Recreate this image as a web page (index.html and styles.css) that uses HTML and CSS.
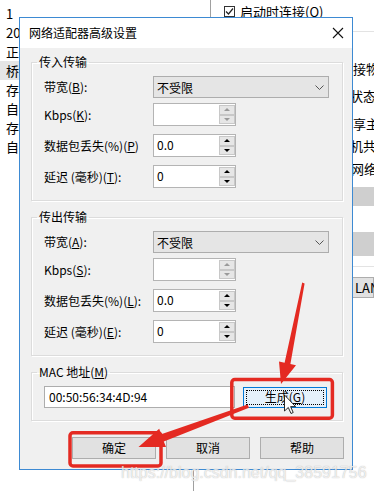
FILE: index.html
```html
<!DOCTYPE html>
<html lang="zh-CN">
<head>
  <meta charset="UTF-8">
  <meta name="viewport" content="width=device-width, initial-scale=1.0">
  <title>网络适配器高级设置</title>
  <link rel="stylesheet" href="styles.css">
</head>
<body>
  <div class="screen">
    <!-- window behind the dialog -->
    <div class="backdrop">
      <div class="back-main">
        <ul class="list">
          <li>1</li>
          <li>20</li>
          <li>正在</li>
          <li class="sel">桥接</li>
          <li>存在</li>
          <li>自动</li>
          <li>存在</li>
          <li>自动</li>
        </ul>
        <div class="pane">
          <div class="pane-top">
            <span class="check">
              <svg width="9" height="9" viewBox="0 0 9 9"><path d="M1 4.5L3.5 7L8 1.5" fill="none" stroke="#222" stroke-width="1.2"/></svg>
            </span>
            启动时连接(<u>O</u>)
          </div>
          <div class="pane-text">
            <p class="l1">连接物理</p>
            <p class="l2">的状态</p>
            <p class="l3">共享主</p>
            <p class="l4">算机共</p>
            <p class="l5">的网络</p>
          </div>
          <div class="bar bar-a"></div>
          <div class="bar bar-b"></div>
          <div class="rule"></div>
          <div class="lan">LAN</div>
        </div>
      </div>
      <div class="back-foot"></div>
    </div>

    <div class="dialog">
      <div class="titlebar">
        <span class="title">网络适配器高级设置</span>
        <svg class="close" width="12" height="12" viewBox="0 0 12 12"><path d="M1 1L11 11M11 1L1 11" stroke="#111" stroke-width="1.1"/></svg>
      </div>
      <div class="dialog-body">
        <fieldset class="group">
          <legend>传入传输</legend>
          <div class="rows">
            <div class="row combo-row">
              <label>带宽(<u>B</u>):</label>
              <div class="combo"><span>不受限</span><svg width="9" height="5" viewBox="0 0 9 5"><path d="M0.5 0.5L4.5 4.5L8.5 0.5" fill="none" stroke="#555" stroke-width="1"/></svg></div>
            </div>
            <div class="row">
              <label>Kbps(<u>K</u>):</label>
              <div class="spin off"><span class="val"></span><span class="arrows"><i class="up"></i><i class="down"></i></span></div>
            </div>
            <div class="row">
              <label>数据包丢失(%)(<u>P</u>)</label>
              <div class="spin"><span class="val">0.0</span><span class="arrows"><i class="up"></i><i class="down"></i></span></div>
            </div>
            <div class="row">
              <label>延迟 (毫秒)(<u>T</u>):</label>
              <div class="spin"><span class="val">0</span><span class="arrows"><i class="up"></i><i class="down"></i></span></div>
            </div>
          </div>
        </fieldset>

        <fieldset class="group">
          <legend>传出传输</legend>
          <div class="rows">
            <div class="row combo-row">
              <label>带宽(<u>A</u>):</label>
              <div class="combo"><span>不受限</span><svg width="9" height="5" viewBox="0 0 9 5"><path d="M0.5 0.5L4.5 4.5L8.5 0.5" fill="none" stroke="#555" stroke-width="1"/></svg></div>
            </div>
            <div class="row">
              <label>Kbps(<u>S</u>):</label>
              <div class="spin off"><span class="val"></span><span class="arrows"><i class="up"></i><i class="down"></i></span></div>
            </div>
            <div class="row">
              <label>数据包丢失(%)(<u>L</u>):</label>
              <div class="spin"><span class="val">0.0</span><span class="arrows"><i class="up"></i><i class="down"></i></span></div>
            </div>
            <div class="row">
              <label>延迟 (毫秒)(<u>E</u>):</label>
              <div class="spin"><span class="val">0</span><span class="arrows"><i class="up"></i><i class="down"></i></span></div>
            </div>
          </div>
        </fieldset>

        <fieldset class="group">
          <legend>MAC 地址(<u>M</u>)</legend>
          <div class="rows">
            <div class="row">
              <div class="mac">00:50:56:34:4D:94</div>
              <button class="btn gen">生成(<u>G</u>)</button>
            </div>
          </div>
        </fieldset>

        <div class="actions">
          <button class="btn">确定</button>
          <button class="btn">取消</button>
          <button class="btn">帮助</button>
        </div>
      </div>
    </div>

    <!-- red annotations and the mouse pointer -->
    <svg class="marks" width="374" height="491" viewBox="0 0 374 491">
      <rect x="231.8" y="379.6" width="100.6" height="38.6" rx="3" fill="none" stroke="#e42a22" stroke-width="3.5"/>
      <rect x="70" y="432.8" width="91" height="33.2" rx="3" fill="none" stroke="#e42a22" stroke-width="3.5"/>
      <polygon points="302.2,282.6 304.6,283.4 290.4,364 296,365.2 281,384 279,361.6 284.6,362.8" fill="#e42a22"/>
      <polygon points="247.6,404.4 249,407.8 163.8,441.4 166,447 138.5,447 159.2,428.8 161.2,434.2" fill="#e42a22"/>
      <polygon points="284.5,395 284.5,411 288.3,407.5 291,413.5 293.2,412.5 290.6,406.6 295.6,406.6" fill="#fff" stroke="#111" stroke-width="0.9" stroke-linejoin="round"/>
    </svg>

    <div class="watermark">https://blog.csdn.net/qq_38591756</div>
  </div>
</body>
</html>
```

FILE: styles.css
```css
html, body {
  margin: 0;
  padding: 0;
  background: #fff;
}

.screen {
  position: relative;
  width: 374px;
  height: 491px;
  overflow: hidden;
  font-family: "Noto Sans CJK SC", "Liberation Sans", sans-serif;
  font-size: 12px;
  color: #000;
}

u {
  text-decoration: underline;
  text-underline-offset: 1px;
}

/* background window */
.backdrop {
  display: flex;
  flex-direction: column;
  height: 491px;
}

.back-main {
  display: flex;
  height: 470px;
}

.list {
  flex: none;
  list-style: none;
  margin: 0;
  padding: 4px 0 0 0;
  width: 210px;
  font-size: 13px;
}

.list li {
  height: 19px;
  line-height: 19px;
  padding-left: 6px;
}

.list li.sel {
  background: #e5e5e5;
}

.pane {
  flex: 1;
  min-width: 0;
  overflow: hidden;
  border-left: 1px solid #a0a0a0;
  font-size: 13px;
}

.pane-top {
  height: 32px;
  border-bottom: 1px solid #e3e3e3;
  display: flex;
  align-items: flex-start;
  padding: 4px 0 0 13px;
  box-sizing: border-box;
  line-height: 16px;
  white-space: nowrap;
}

.check {
  width: 11px;
  height: 11px;
  border: 1px solid #333;
  box-sizing: border-box;
  display: flex;
  align-items: center;
  justify-content: center;
  margin: 2px 5px 0 0;
}

.pane-text {
  padding-left: 130px;
}

.pane-text p {
  margin: 0;
  height: 22px;
  line-height: 22px;
  white-space: nowrap;
}

.pane-text .l1 { margin-top: 26px; margin-left: -1px; }
.pane-text .l2 { margin-top: 5px; margin-left: -4px; }
.pane-text .l3 { margin-top: 6px; margin-left: -1px; }
.pane-text .l4 { margin-top: 0; margin-left: -4px; }
.pane-text .l5 { margin-top: 1px; margin-left: -3px; }

.bar {
  background: #cfcfcf;
}

.bar-a {
  margin-top: 7px;
  height: 19px;
}

.bar-b {
  margin-top: 26px;
  height: 24px;
}

.rule {
  margin-top: 10px;
  border-top: 1px solid #e3e3e3;
}

.lan {
  margin: 10px 0 0 120px;
  height: 21px;
  box-sizing: border-box;
  border: 1px solid #adadad;
  background: #e1e1e1;
  padding-left: 23px;
  line-height: 19px;
}

.back-foot {
  flex: 1;
  margin-left: 193px;
  border-left: 1px solid #a0a0a0;
}

/* dialog */
.dialog {
  position: absolute;
  left: 19px;
  top: 17px;
  width: 334px;
  height: 453px;
  box-sizing: border-box;
  border: 1px solid #3d8ad3;
  background: #f0f0f0;
  display: flex;
  flex-direction: column;
}

.titlebar {
  height: 30px;
  background: #fff;
  display: flex;
  align-items: center;
  justify-content: space-between;
  padding: 0 8px 0 9px;
}

.title {
  line-height: 16px;
}

.dialog-body {
  padding: 6px 9px 0 11px;
  display: flex;
  flex-direction: column;
}

.group {
  margin: 0;
  padding: 0;
  min-width: 0;
  border: 1px solid #dcdcdc;
  box-shadow: inset 1px 1px 0 #fff, 1px 1px 0 #fff;
}

.group + .group {
  margin-top: 8px;
}

.group legend {
  margin-left: 5px;
  padding: 0 2px;
  line-height: 16px;
  height: 16px;
}

.rows {
  display: flex;
  flex-direction: column;
  padding: 6px 0 12px 12px;
}

.row {
  display: flex;
  align-items: center;
}

.row + .row {
  margin-top: 8px;
}

.combo-row + .row {
  margin-top: 5px;
}

.row label {
  width: 109px;
  line-height: 16px;
  white-space: nowrap;
}

.combo {
  width: 176px;
  height: 22px;
  box-sizing: border-box;
  border: 1px solid #adadad;
  background: #e5e5e5;
  display: flex;
  align-items: center;
  justify-content: space-between;
  padding: 0 4px 0 3px;
}

.spin {
  width: 83px;
  height: 23px;
  box-sizing: border-box;
  border: 1px solid #b4b4b4;
  background: #fff;
  display: flex;
}

.spin .val {
  flex: 1;
  padding-left: 3px;
  line-height: 19px;
}

.arrows {
  width: 16px;
  display: flex;
  flex-direction: column;
  padding: 1px 0;
  box-sizing: border-box;
}

.arrows i {
  flex: 1;
  background: #e6e6e6;
  border: 1px solid #c8c8c8;
  display: flex;
  align-items: center;
  justify-content: center;
}

.arrows i::before {
  content: "";
  border-left: 3px solid transparent;
  border-right: 3px solid transparent;
}

.arrows .up::before {
  border-bottom: 3px solid #000;
}

.arrows .down::before {
  border-top: 3px solid #000;
}

.spin.off .up::before {
  border-bottom-color: #9a9a9a;
}

.spin.off .down::before {
  border-top-color: #9a9a9a;
}

.mac {
  width: 191px;
  height: 22px;
  box-sizing: border-box;
  border: 1px solid #adadad;
  background: #fff;
  padding-left: 4px;
  line-height: 20px;
}

.btn {
  width: 84px;
  height: 22px;
  box-sizing: border-box;
  border: 1px solid #adadad;
  background: #e1e1e1;
  font: inherit;
  color: #000;
  padding: 0;
  line-height: 18px;
}

.btn.gen {
  margin-left: 8px;
  height: 21px;
  background: #e5f1fb;
  border-color: #0078d7;
  outline: 1px dotted #000;
  outline-offset: -4px;
}

.actions {
  display: flex;
  justify-content: flex-end;
  gap: 10px;
  margin: 16px -1px 0 0;
}

/* overlays */
.marks {
  position: absolute;
  left: 0;
  top: 0;
  pointer-events: none;
}

.watermark {
  position: absolute;
  left: 121px;
  top: 463px;
  font-family: "Liberation Sans", Arial, sans-serif;
  font-size: 16px;
  line-height: 20px;
  color: rgba(255, 255, 255, 0.75);
  text-shadow: 0 0 1px rgba(110, 110, 110, 0.55);
  white-space: nowrap;
}
```
